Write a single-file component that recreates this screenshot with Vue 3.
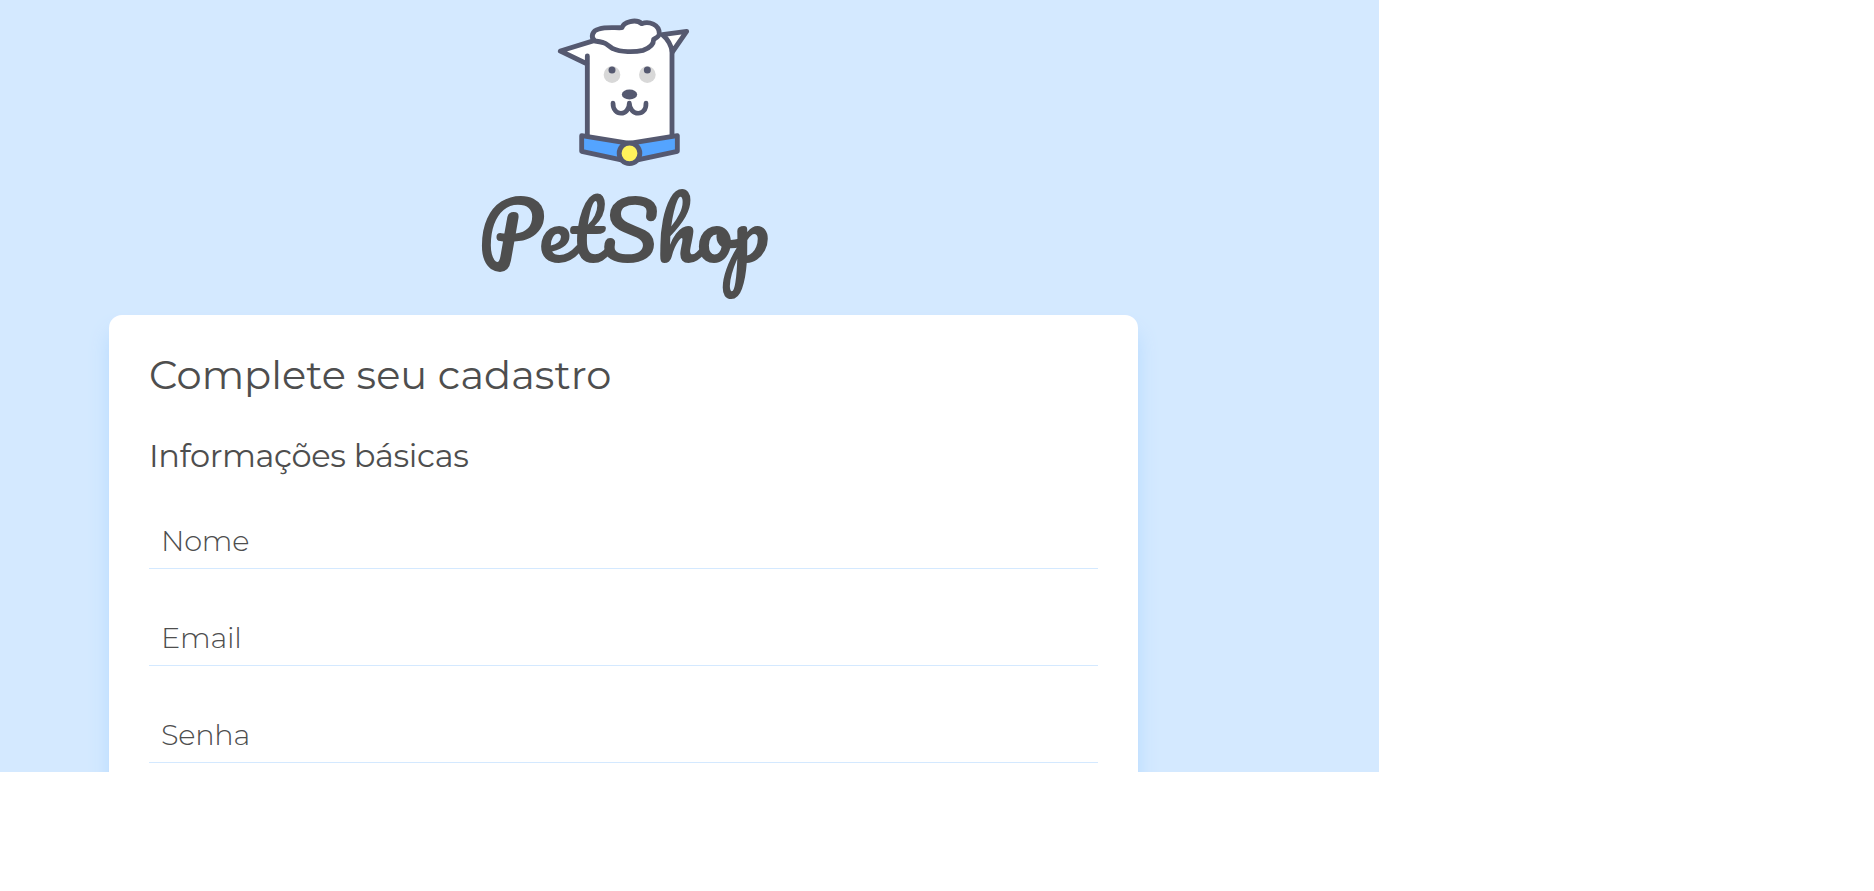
<script setup>
const fields = [
  { name: 'nome', label: 'Nome' },
  { name: 'email', label: 'Email' },
  { name: 'senha', label: 'Senha' },
]
</script>

<template>
  <main class="page">
    <header class="brand">
      <svg class="dog" viewBox="51 0 402 540" aria-hidden="true">
        <g stroke="#555970" stroke-width="14.5" stroke-linejoin="round" stroke-linecap="round">
          <path d="M142 194 L61 153 L160 123 L365 105 Q386 122 396 156 V408 L268 428 L142 408 Z" fill="#fff" stroke="none" />
          <path d="M142 408 V168 M142 192 L61 153 L162 122" fill="none" />
          <path d="M367 104 L440 94 L397 156 Q391 124 367 104 Z" fill="#fff" />
          <path d="M396 152 V408" fill="none" />
          <path d="M165 123 C150 112 157 91 177 87 C199 80 224 84 246 83 C250 66 288 55 305 71 C327 63 358 73 358 101 C358 109 349 113 341 118 C341 133 328 145 309 151 C284 157 242 157 219 146 C207 141 202 131 190 128 C181 125 174 124 165 123 Z" fill="#fff" />
        </g>
        <circle cx="216" cy="224" r="25" fill="#d8d8d8" />
        <circle cx="322" cy="224" r="25" fill="#d8d8d8" />
        <circle cx="216" cy="210" r="10.5" fill="#555970" />
        <circle cx="322" cy="210" r="10.5" fill="#555970" />
        <ellipse cx="268.500" cy="283.500" rx="23" ry="15" fill="#555970" />
        <path d="M219 309 C218 351 268 349 268 309 C269 349 320 351 318 309" fill="none" stroke="#555970" stroke-width="14" stroke-linecap="round" stroke-linejoin="round" />
        <path d="M125 407 L268 430 L412 407 V454 L268 485 L125 454 Z" fill="#54a4ff" stroke="#555970" stroke-width="14.5" stroke-linejoin="round" />
        <circle cx="268.500" cy="460" r="31" fill="#fff35b" stroke="#555970" stroke-width="14.5" />
      </svg>
      <div class="wordmark">PetShop</div>
    </header>

    <section class="card">
      <h1 class="title">Complete seu cadastro</h1>
      <form>
        <h2 class="subtitle">Informações básicas</h2>
        <label v-for="field in fields" :key="field.name" class="field" :class="field.name">
          <span>{{ field.label }}</span>
        </label>
      </form>
    </section>
  </main>
</template>

<style>
body {
  margin: 0;
  background: #fff;
}
</style>

<style scoped>
.page {
  box-sizing: border-box;
  width: 1379px;
  height: 772px;
  overflow: hidden;
  padding: 0 241px 0 109px;
  background: #d4e9ff;
  color: #4e4e4e;
  font-family: Montserrat, Inter, "Open Sans", sans-serif;
}
.brand {
  display: flex;
  flex-direction: column;
  align-items: center;
  height: 315px;
}
.dog {
  width: 134px;
  height: 180px;
  flex: none;
}
.wordmark {
  flex: none;
  font: 400 80px/98px Pacifico, Lato, cursive;
}
.card {
  box-sizing: border-box;
  height: 620px;
  width: 1029px;
  padding: 35px 40px;
  border-radius: 13px;
  background: #fff;
  box-shadow: 0 16px 20px #b6daff;
}
.title,
.subtitle {
  margin: 0;
  white-space: nowrap;
}
.title {
  font-size: 40px;
  font-weight: 400;
  line-height: 50px;
  letter-spacing: 0.05px;
}
.subtitle {
  margin-top: 35px;
  font-size: 32px;
  font-weight: 400;
  line-height: 42px;
  letter-spacing: -0.32px;
}
.field {
  box-sizing: border-box;
  display: block;
  height: 97px;
  padding: 49px 12px 0;
  border-bottom: 1px solid #d4e9ff;
  font-size: 28.8px;
  font-weight: 300;
  line-height: 40px;
  letter-spacing: -0.25px;
}
.field.nome {
  height: 92px;
  padding-top: 44px;
}
</style>
